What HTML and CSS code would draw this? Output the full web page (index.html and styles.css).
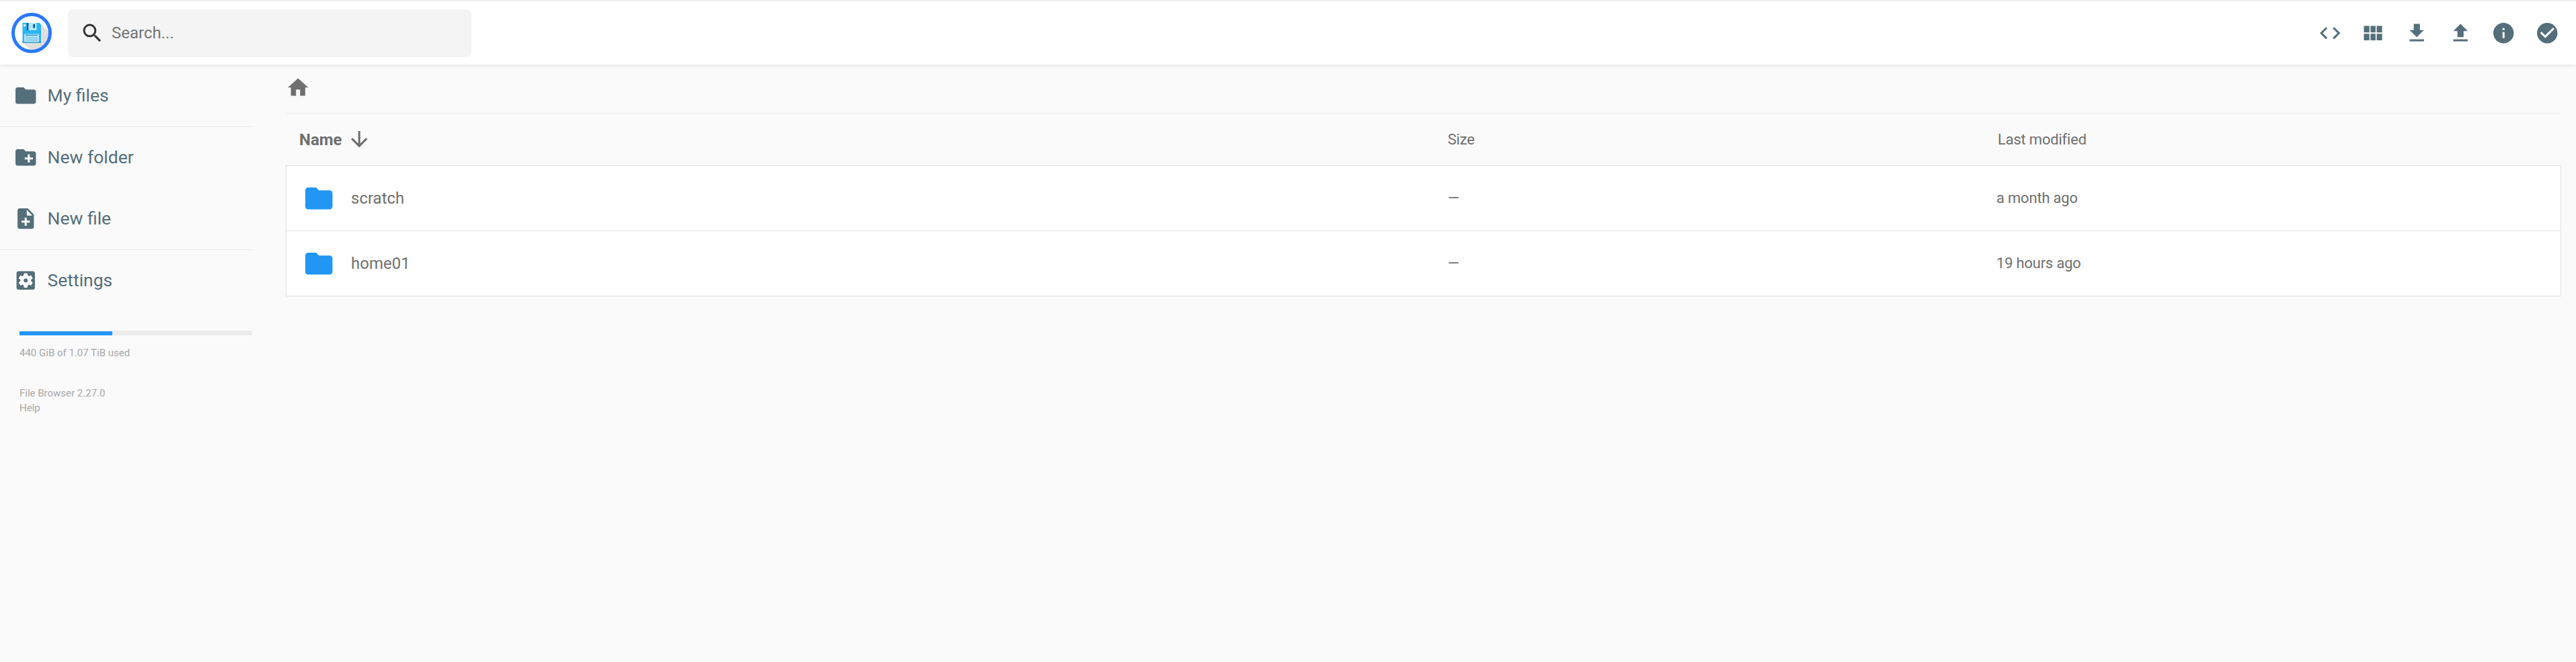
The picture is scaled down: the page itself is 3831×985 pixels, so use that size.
FILE: index.html
```
<!DOCTYPE html>
<html lang="en">
<head>
<meta charset="utf-8">
<title>File Browser</title>
<link rel="stylesheet" href="styles.css">
</head>
<body>
<header class="topbar">
  <svg class="logo" viewBox="0 0 60 60">
    <circle cx="30" cy="30" r="27.5" fill="#fff"/>
    <path d="M42.500 15.500L56 29A26 26 0 0 1 28 55.500L17 44z" fill="#e0dfde"/>
    <circle cx="30" cy="30" r="27.500" fill="none" stroke="#2979ff" stroke-width="5"/>
    <path d="M16.500 15H41.500L44 17.500V44.500H16.500z" fill="#29b6f6"/>
    <path d="M16.500 43.500H44V44.500H16.500z" fill="#0277a8"/>
    <path d="M23 15H25.500V26H23z" fill="#01579b"/>
    <path d="M25.500 15H37.500V26H25.500z" fill="#b3e5fc"/>
    <path d="M32.300 17H35V22.500H32.300z" fill="#01579b"/>
    <circle cx="19.700" cy="18.800" r="1.700" fill="#fff"/>
    <path d="M19 31.500H41V43.500H19z" fill="#b3e5fc"/>
    <path d="M21 33.300H39" stroke="#0277a8" stroke-width="1"/>
    <path d="M21 37.300H39M21 40.500H39" stroke="#4a9cc7" stroke-width=".8"/>
  </svg>
  <div class="search">
    <svg class="icon" viewBox="0 0 24 24"><path d="M15.500 14h-.79l-.28-.27A6.470 6.470 0 0 0 16 9.500 6.500 6.500 0 1 0 9.500 16c1.610 0 3.090-.59 4.230-1.570l.27.28v.79l5 4.990L20.490 19l-4.990-5zm-6 0C7.010 14 5 11.990 5 9.500S7.010 5 9.500 5 14 7.010 14 9.500 11.990 14 9.500 14z"/></svg>
    <span>Search...</span>
  </div>
  <div class="actions">
    <svg class="icon" viewBox="0 0 24 24"><path d="M9.400 16.600L4.800 12l4.600-4.600L8 6l-6 6 6 6 1.400-1.400zm5.200 0l4.600-4.600-4.600-4.600L16 6l6 6-6 6-1.400-1.400z"/></svg>
    <svg class="icon" viewBox="0 0 24 24"><path d="M3 5h5.400v6.400H3zM9.500 5h4.900v6.400H9.500zM15.500 5h5.300v6.400h-5.300zM3 12.700h5.400v6.400H3zM9.500 12.700h4.900v6.400H9.500zM15.500 12.700h5.300v6.400h-5.300z"/></svg>
    <svg class="icon" viewBox="0 0 24 24"><path d="M19 9h-4V3H9v6H5l7 7 7-7zM5 18v2h14v-2H5z"/></svg>
    <svg class="icon" viewBox="0 0 24 24"><path d="M9 16h6v-6h4l-7-7-7 7h4zm-4 2h14v2H5z"/></svg>
    <svg class="icon" viewBox="0 0 24 24"><path d="M12 2C6.480 2 2 6.480 2 12s4.480 10 10 10 10-4.480 10-10S17.520 2 12 2zm1 15h-2v-6h2v6zm0-8h-2V7h2v2z"/></svg>
    <svg class="icon" viewBox="0 0 24 24"><path d="M12 2C6.480 2 2 6.480 2 12s4.480 10 10 10 10-4.480 10-10S17.520 2 12 2zm-2 15l-5-5 1.410-1.410L10 14.170l7.590-7.590L19 8l-9 9z"/></svg>
  </div>
</header>
<div class="layout">
  <nav class="sidebar">
    <div class="group"><a class="link"><svg class="icon" viewBox="0 0 24 24"><path d="M10 4H4c-1.100 0-1.990.9-1.990 2L2 18c0 1.100.9 2 2 2h16c1.100 0 2-.9 2-2V8c0-1.100-.9-2-2-2h-8l-2-2z"/></svg><span>My files</span></a></div>
    <div class="group">
      <a class="link"><svg class="icon" viewBox="0 0 24 24"><path d="M20 6h-8l-2-2H4c-1.110 0-1.990.89-1.990 2L2 18c0 1.110.89 2 2 2h16c1.110 0 2-.89 2-2V8c0-1.110-.89-2-2-2zm-1 8h-3v3h-2v-3h-3v-2h3V9h2v3h3v2z"/></svg><span>New folder</span></a>
      <a class="link"><svg class="icon" viewBox="0 0 24 24"><path d="M14 2H6c-1.100 0-1.990.9-1.990 2L4 20c0 1.100.89 2 1.990 2H18c1.100 0 2-.9 2-2V8l-6-6zm2 14h-3v3h-2v-3H8v-2h3v-3h2v3h3v2zm-3-7V3.500L18.500 9H13z"/></svg><span>New file</span></a>
    </div>
    <div class="group"><a class="link"><svg class="icon" viewBox="0 0 24 24"><path d="M12 10c-1.100 0-2 .9-2 2s.9 2 2 2 2-.9 2-2-.9-2-2-2zm7-7H5c-1.110 0-2 .9-2 2v14c0 1.100.89 2 2 2h14c1.110 0 2-.9 2-2V5c0-1.100-.89-2-2-2zm-1.750 9c0 .23-.02.460-.05.680l1.480 1.160c.13.110.17.300.08.450l-1.400 2.420c-.09.150-.27.210-.43.150l-1.740-.7c-.36.280-.76.510-1.180.690l-.26 1.850c-.03.170-.18.300-.35.300h-2.800c-.17 0-.32-.13-.35-.29l-.26-1.850c-.43-.18-.82-.41-1.180-.69l-1.740.7c-.16.060-.34 0-.43-.15l-1.400-2.420c-.09-.15-.05-.34.080-.45l1.480-1.160c-.03-.23-.05-.46-.05-.69 0-.23.020-.46.050-.68l-1.480-1.160c-.13-.11-.17-.3-.08-.45l1.400-2.420c.09-.15.270-.21.430-.15l1.740.7c.36-.28.760-.51 1.180-.69l.26-1.850c.03-.17.180-.3.350-.3h2.800c.17 0 .32.130.35.290l.26 1.850c.43.180.82.410 1.180.69l1.740-.7c.16-.06.340 0 .43.150l1.400 2.420c.09.150.05.340-.08.450l-1.480 1.160c.03.230.05.460.05.690z"/></svg><span>Settings</span></a></div>
    <div class="usage">
      <div class="meter"><div class="fill"></div></div>
      <div>440 GiB of 1.07 TiB used</div>
    </div>
    <div class="credits"><div>File Browser 2.27.0</div><div>Help</div></div>
  </nav>
  <main class="files">
    <div class="breadcrumbs"><svg class="icon" viewBox="0 0 24 24"><path d="M10 20v-6h4v6h5v-8h3L12 3 2 12h3v8z"/></svg></div>
    <div class="columns head">
      <div class="name"><b>Name</b><svg class="icon" viewBox="0 0 24 24"><path d="M20 12l-1.410-1.410L13 16.170V4h-2v12.170l-5.580-5.590L4 12l8 8 8-8z"/></svg></div>
      <div class="size">Size</div>
      <div class="modified">Last modified</div>
    </div>
    <div class="list">
      <div class="columns row">
        <div class="name"><svg class="folder" viewBox="0 0 24 24"><path d="M10 4H4c-1.100 0-1.990.9-1.990 2L2 18c0 1.100.9 2 2 2h16c1.100 0 2-.9 2-2V8c0-1.100-.9-2-2-2h-8l-2-2z"/></svg><span>scratch</span></div>
        <div class="size">—</div>
        <div class="modified">a month ago</div>
      </div>
      <div class="columns row">
        <div class="name"><svg class="folder" viewBox="0 0 24 24"><path d="M10 4H4c-1.100 0-1.990.9-1.990 2L2 18c0 1.100.9 2 2 2h16c1.100 0 2-.9 2-2V8c0-1.100-.9-2-2-2h-8l-2-2z"/></svg><span>home01</span></div>
        <div class="size">—</div>
        <div class="modified">19 hours ago</div>
      </div>
    </div>
  </main>
</div>
</body>
</html>
```
FILE: styles.css
```
* { box-sizing: border-box; }
body {
  margin: 0;
  min-height: 985px;
  background: #fafafa;
  color: #6f6f6f;
  font-family: Roboto, sans-serif;
  font-size: 24px;
}
.icon { width: 36.5px; height: 36.5px; fill: currentColor; flex: none; display: block; }

.topbar {
  position: relative;
  display: flex;
  align-items: center;
  height: 96px;
  padding: 1px 10.5px 0 17px;
  background: #fff;
  border-top: 1px solid #e3e3e3;
  box-shadow: 0 0 8px rgba(0, 0, 0, .13);
}
.logo { width: 60px; height: 60px; flex: none; }
.search {
  display: flex;
  align-items: center;
  gap: 10.5px;
  width: 600px;
  height: 71px;
  margin-left: 24px;
  padding-left: 18px;
  border-radius: 7px;
  background: #f4f4f4;
  color: #757575;
}
.search .icon { color: #333; }
.actions { display: flex; gap: 28.2px; margin-left: auto; padding-right: 14px; color: #546e7a; }

.layout { display: flex; }
.sidebar { width: 377px; flex: none; padding-top: 1px; color: #546e7a; }
.group + .group { border-top: 1px solid #ececec; }
.link { display: flex; align-items: center; gap: 14px; height: 91px; padding-left: 20px; font-size: 26.5px; }
.link span { padding-bottom: 2px; }
.usage { margin-top: 29px; padding-left: 29px; }
.usage, .credits { font-size: 15px; line-height: 22px; color: #a8a8a8; }
.meter { width: 346px; height: 7px; margin-bottom: 15px; padding-top: 1px; background: #ececec; }
.fill { width: 138px; height: 6px; background: #2196f3; }
.credits { margin-top: 38px; padding-left: 29px; }

.files { width: 3384px; margin-left: 48px; }
.breadcrumbs { height: 73px; padding-top: 16px; border-bottom: 1px solid #ececec; }
.columns { display: grid; grid-template-columns: 1707px 817px 1fr; align-items: center; }
.name { display: flex; align-items: center; }
.head { height: 77px; padding-left: 20px; }
.head .icon { margin-left: 7px; }
.list { border: 1px solid #e1e1e1; background: #fff; }
.row { height: 96px; padding-left: 20px; }
.row + .row { height: 97px; border-top: 1px solid #e1e1e1; }
.folder { width: 48.5px; height: 48.5px; margin: 0 23.5px 0 4px; fill: #2196f3; }
.size, .modified { font-size: 22px; letter-spacing: -.2px; }
.head .size, .head .modified { padding-left: 1px; }
.head .modified { padding-left: 2px; }
.row .modified { margin-left: -1px; }
.row .size, .row .modified { padding-bottom: 2px; }
```
